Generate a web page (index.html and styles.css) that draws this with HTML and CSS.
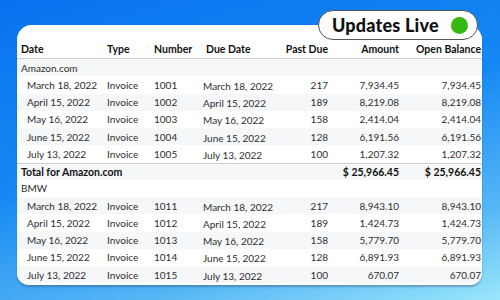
FILE: index.html
```html
<!DOCTYPE html>
<html>
<head>
<meta charset="utf-8">
<link rel="stylesheet" href="styles.css">
</head>
<body>
<div class="stage">
  <div class="card">
    <div class="row head">
      <span>Date</span><span>Type</span><span>Number</span><span class="due">Due Date</span><span class="r">Past Due</span><span class="r">Amount</span><span class="r">Open Balance</span>
    </div>
    <div class="row group"><span class="full">Amazon.com</span></div>
    <div class="row"><span class="ind">March 18, 2022</span><span>Invoice</span><span>1001</span><span class="due">March 18, 2022</span><span class="r">217</span><span class="r">7,934.45</span><span class="r">7,934.45</span></div>
    <div class="row"><span class="ind">April 15, 2022</span><span>Invoice</span><span>1002</span><span class="due">April 15, 2022</span><span class="r">189</span><span class="r">8,219.08</span><span class="r">8,219.08</span></div>
    <div class="row"><span class="ind">May 16, 2022</span><span>Invoice</span><span>1003</span><span class="due">May 16, 2022</span><span class="r">158</span><span class="r">2,414.04</span><span class="r">2,414.04</span></div>
    <div class="row"><span class="ind">June 15, 2022</span><span>Invoice</span><span>1004</span><span class="due">June 15, 2022</span><span class="r">128</span><span class="r">6,191.56</span><span class="r">6,191.56</span></div>
    <div class="row"><span class="ind">July 13, 2022</span><span>Invoice</span><span>1005</span><span class="due">July 13, 2022</span><span class="r">100</span><span class="r">1,207.32</span><span class="r">1,207.32</span></div>
    <div class="row total"><span class="span5">Total for Amazon.com</span><span class="r">$ 25,966.45</span><span class="r">$ 25,966.45</span></div>
    <div class="row group"><span class="full">BMW</span></div>
    <div class="row"><span class="ind">March 18, 2022</span><span>Invoice</span><span>1011</span><span class="due">March 18, 2022</span><span class="r">217</span><span class="r">8,943.10</span><span class="r">8,943.10</span></div>
    <div class="row"><span class="ind">April 15, 2022</span><span>Invoice</span><span>1012</span><span class="due">April 15, 2022</span><span class="r">189</span><span class="r">1,424.73</span><span class="r">1,424.73</span></div>
    <div class="row"><span class="ind">May 16, 2022</span><span>Invoice</span><span>1013</span><span class="due">May 16, 2022</span><span class="r">158</span><span class="r">5,779.70</span><span class="r">5,779.70</span></div>
    <div class="row"><span class="ind">June 15, 2022</span><span>Invoice</span><span>1014</span><span class="due">June 15, 2022</span><span class="r">128</span><span class="r">6,891.93</span><span class="r">6,891.93</span></div>
    <div class="row"><span class="ind">July 13, 2022</span><span>Invoice</span><span>1015</span><span class="due">July 13, 2022</span><span class="r">100</span><span class="r">670.07</span><span class="r">670.07</span></div>
  </div>
  <div class="badge"><span class="badge-text">Updates Live</span><span class="dot"></span></div>
</div>
</body>
</html>
```
FILE: styles.css
```css
html, body {
  margin: 0;
  padding: 0;
}
body {
  width: 500px;
  height: 300px;
  overflow: hidden;
  font-family: Lato, "Noto Sans", sans-serif;
}
.stage {
  position: relative;
  width: 500px;
  height: 300px;
  box-sizing: border-box;
  padding: 25px 18px 0 17px;
  background: linear-gradient(165deg, #0a72ef 0%, #1488f3 45%, #55b6f5 78%, #9ae6fb 100%);
}
.card {
  background: #fff;
  border-radius: 15px 15px 12px 12px;
  padding: 0 1px 2px 4px;
  box-shadow: 0 2px 2px rgba(40, 60, 90, 0.35);
  overflow: hidden;
}
.row {
  display: grid;
  grid-template-columns: 86px 47px 49px 65px 60px 71px 82px;
  height: 17.25px;
  align-items: center;
  font-size: 10px;
  color: #2e2e2e;
  white-space: nowrap;
  margin-left: -4px;
  padding-left: 4px;
  margin-right: -1px;
  padding-right: 1px;
}
.row:nth-child(even) {
  background: #f6f7f9;
}
.row.head {
  height: 34px;
  align-items: end;
  box-sizing: border-box;
  padding-bottom: 3px;
  border-bottom: 1px solid #c9ced4;
  font-size: 10.5px;
  font-weight: 700;
  color: #111;
  background: #fff;
}
.r {
  text-align: right;
}
.ind {
  padding-left: 6px;
}
.due {
  padding-top: 2px;
}
.head .due {
  padding-top: 0;
  padding-left: 3px;
}
.full {
  grid-column: 1 / span 4;
}
.span5 {
  grid-column: 1 / span 5;
}
.row.total {
  font-size: 10.5px;
  font-weight: 700;
  color: #111;
  border-top: 1px solid #c9ced4;
  box-sizing: border-box;
}
.badge {
  position: absolute;
  left: 318px;
  top: 10px;
  width: 160px;
  height: 30px;
  box-sizing: border-box;
  border: 1.5px solid #555;
  border-radius: 15px;
  background: #fff;
  display: flex;
  align-items: center;
  padding: 0 9px 0 13px;
  justify-content: space-between;
}
.badge-text {
  font-family: Lato, sans-serif;
  font-weight: 900;
  font-size: 18px;
  color: #111;
  letter-spacing: 0.2px;
}
.dot {
  width: 17px;
  height: 17px;
  border-radius: 50%;
  background: #35b812;
}
```
